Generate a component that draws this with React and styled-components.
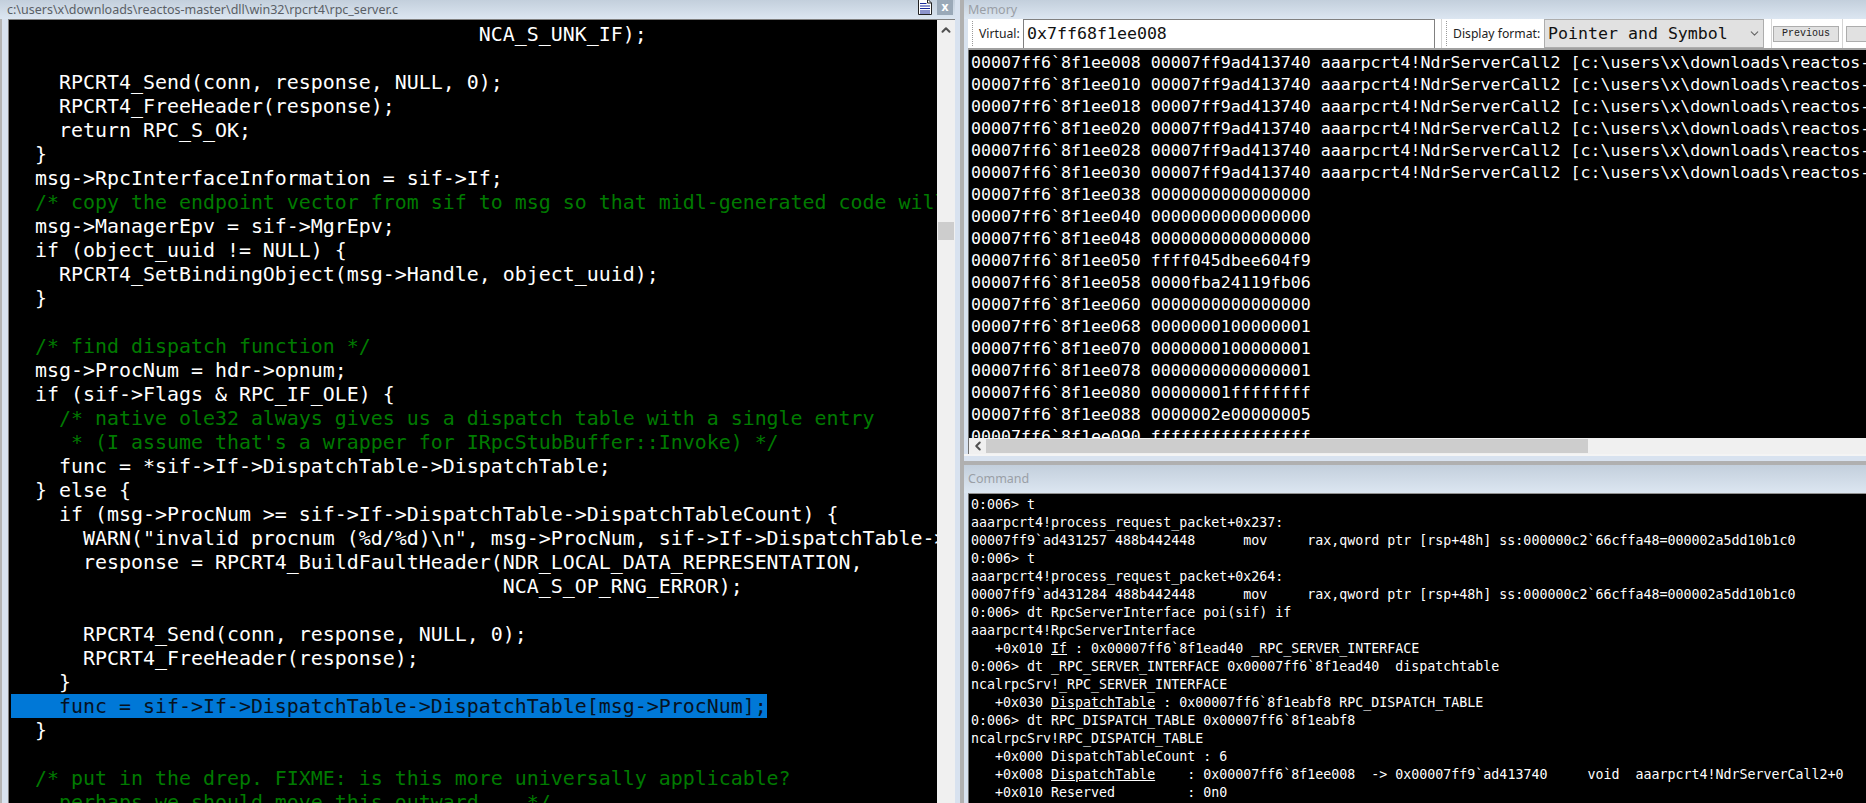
import React from 'react';
import styled, { createGlobalStyle } from 'styled-components';
import { ChevronDown, ChevronLeft, ChevronUp } from 'lucide-react';

const GlobalStyle = createGlobalStyle`
  html, body {
    margin: 0;
    padding: 0;
    background: #fff;
  }
`;

const MONO = '"DejaVu Sans Mono", "Liberation Mono", monospace';
const UI = '"Noto Sans", "Open Sans", sans-serif';

const codeLines = [
  { text: '                                       NCA_S_UNK_IF);' },
  { text: '' },
  { text: '    RPCRT4_Send(conn, response, NULL, 0);' },
  { text: '    RPCRT4_FreeHeader(response);' },
  { text: '    return RPC_S_OK;' },
  { text: '  }' },
  { text: '  msg->RpcInterfaceInformation = sif->If;' },
  { text: '  /* copy the endpoint vector from sif to msg so that midl-generated code will', comment: true },
  { text: '  msg->ManagerEpv = sif->MgrEpv;' },
  { text: '  if (object_uuid != NULL) {' },
  { text: '    RPCRT4_SetBindingObject(msg->Handle, object_uuid);' },
  { text: '  }' },
  { text: '' },
  { text: '  /* find dispatch function */', comment: true },
  { text: '  msg->ProcNum = hdr->opnum;' },
  { text: '  if (sif->Flags & RPC_IF_OLE) {' },
  { text: '    /* native ole32 always gives us a dispatch table with a single entry', comment: true },
  { text: "     * (I assume that's a wrapper for IRpcStubBuffer::Invoke) */", comment: true },
  { text: '    func = *sif->If->DispatchTable->DispatchTable;' },
  { text: '  } else {' },
  { text: '    if (msg->ProcNum >= sif->If->DispatchTable->DispatchTableCount) {' },
  { text: '      WARN("invalid procnum (%d/%d)\\n", msg->ProcNum, sif->If->DispatchTable->DispatchTableCount);' },
  { text: '      response = RPCRT4_BuildFaultHeader(NDR_LOCAL_DATA_REPRESENTATION,' },
  { text: '                                         NCA_S_OP_RNG_ERROR);' },
  { text: '' },
  { text: '      RPCRT4_Send(conn, response, NULL, 0);' },
  { text: '      RPCRT4_FreeHeader(response);' },
  { text: '    }' },
  { text: '    func = sif->If->DispatchTable->DispatchTable[msg->ProcNum];', selected: true },
  { text: '  }' },
  { text: '' },
  { text: '  /* put in the drep. FIXME: is this more universally applicable?', comment: true },
  { text: '    perhaps we should move this outward... */', comment: true },
];

const SYMBOL = 'aaarpcrt4!NdrServerCall2 [c:\\users\\x\\downloads\\reactos-master\\dll\\win32\\rpcrt4\\ndr_stubless.c]';

const memoryRows = [
  ['008', '00007ff9ad413740', SYMBOL],
  ['010', '00007ff9ad413740', SYMBOL],
  ['018', '00007ff9ad413740', SYMBOL],
  ['020', '00007ff9ad413740', SYMBOL],
  ['028', '00007ff9ad413740', SYMBOL],
  ['030', '00007ff9ad413740', SYMBOL],
  ['038', '0000000000000000'],
  ['040', '0000000000000000'],
  ['048', '0000000000000000'],
  ['050', 'ffff045dbee604f9'],
  ['058', '0000fba24119fb06'],
  ['060', '0000000000000000'],
  ['068', '0000000100000001'],
  ['070', '0000000100000001'],
  ['078', '0000000000000001'],
  ['080', '00000001ffffffff'],
  ['088', '0000002e00000005'],
  ['090', 'ffffffffffffffff'],
];

const commandLines = [
  ['0:006> t'],
  ['aaarpcrt4!process_request_packet+0x237:'],
  ['00007ff9`ad431257 488b442448      mov     rax,qword ptr [rsp+48h] ss:000000c2`66cffa48=000002a5dd10b1c0'],
  ['0:006> t'],
  ['aaarpcrt4!process_request_packet+0x264:'],
  ['00007ff9`ad431284 488b442448      mov     rax,qword ptr [rsp+48h] ss:000000c2`66cffa48=000002a5dd10b1c0'],
  ['0:006> dt RpcServerInterface poi(sif) if'],
  ['aaarpcrt4!RpcServerInterface'],
  ['   +0x010 ', { field: 'If' }, ' : 0x00007ff6`8f1ead40 _RPC_SERVER_INTERFACE'],
  ['0:006> dt _RPC_SERVER_INTERFACE 0x00007ff6`8f1ead40  dispatchtable'],
  ['ncalrpcSrv!_RPC_SERVER_INTERFACE'],
  ['   +0x030 ', { field: 'DispatchTable' }, ' : 0x00007ff6`8f1eabf8 RPC_DISPATCH_TABLE'],
  ['0:006> dt RPC_DISPATCH_TABLE 0x00007ff6`8f1eabf8'],
  ['ncalrpcSrv!RPC_DISPATCH_TABLE'],
  ['   +0x000 DispatchTableCount : 6'],
  ['   +0x008 ', { field: 'DispatchTable' }, '    : 0x00007ff6`8f1ee008  -> 0x00007ff9`ad413740     void  aaarpcrt4!NdrServerCall2+0'],
  ['   +0x010 Reserved         : 0n0'],
];

const App = () => {
  return (
    <>
      <GlobalStyle />
      <Workspace>
        <SourceWindow>
          <TitleBar $height={19}>
            <TitleText $color='#5a5f66' $indent={7}>
              c:\users\x\downloads\reactos-master\dll\win32\rpcrt4\rpc_server.c
            </TitleText>
            <DocIcon width='14' height='15' viewBox='0 0 14 15'>
              <path d='M0.5 -1H9.5L13.5 3V14.5H0.5Z' fill='#fff' stroke='#222' />
              <path d='M9.5 -1V3H13.5' fill='none' stroke='#222' />
              <path d='M2 3.5H8.5M2 6H12M2 8.5H12M2 11H12M2 13H12' stroke='#1a2a9a' strokeWidth='1.2' />
            </DocIcon>
            <CloseButton>x</CloseButton>
          </TitleBar>
          <SourceBody>
            <CodeArea>
              {codeLines.map((line, i) => (
                <CodeLine key={i} $comment={line.comment} $selected={line.selected}>
                  {line.text}
                </CodeLine>
              ))}
            </CodeArea>
            <VerticalScroll>
              <ScrollArrow $width={18} $height={20}>
                <ChevronUp size={14} strokeWidth={3.5} />
              </ScrollArrow>
              <VerticalThumb />
            </VerticalScroll>
          </SourceBody>
        </SourceWindow>

        <Splitter />

        <RightColumn>
          <TitleBar $height={19}>
            <TitleText $color='#9a9fa6' $indent={4}>Memory</TitleText>
          </TitleBar>
          <Toolbar>
            <Grip />
            <ToolLabel $width={44}>Virtual:</ToolLabel>
            <AddressInput>0x7ff68f1ee008</AddressInput>
            <ToolDivider />
            <Grip />
            <ToolLabel $width={91}>Display format:</ToolLabel>
            <FormatSelect>
              <span>Pointer and Symbol</span>
              <ChevronDown size={13} color='#666' />
            </FormatSelect>
            <ToolDivider $left={7} $right={1} />
            <PagerButton $width={66}>Previous</PagerButton>
            <ToolDivider $left={3} $right={3} />
            <PagerButton $width={40} />
          </Toolbar>
          <MemoryBody>
            {memoryRows.map(([offset, value, symbol]) => (
              <MemoryRow key={offset}>
                {`00007ff6\`8f1ee${offset} ${value}${symbol ? ' ' + symbol : ''}`}
              </MemoryRow>
            ))}
          </MemoryBody>
          <HorizontalScroll>
            <ScrollArrow $width={17} $height={16}>
              <ChevronLeft size={14} strokeWidth={3.5} />
            </ScrollArrow>
            <HorizontalThumb />
          </HorizontalScroll>

          <PaneGap />

          <TitleBar $height={28}>
            <TitleText $color='#9a9fa6' $indent={4}>Command</TitleText>
          </TitleBar>
          <CommandBody>
            {commandLines.map((parts, i) => (
              <CommandRow key={i}>
                {parts.map((part, j) =>
                  typeof part === 'string' ? part : <CommandField key={j}>{part.field}</CommandField>
                )}
              </CommandRow>
            ))}
          </CommandBody>
        </RightColumn>
      </Workspace>
    </>
  );
};

export default App;

const Workspace = styled.div`
  width: 1866px;
  height: 803px;
  display: flex;
  overflow: hidden;
  background: #fff;
`;

const SourceWindow = styled.section`
  width: 955px;
  height: 803px;
  flex: none;
  display: flex;
  flex-direction: column;
`;

const TitleBar = styled.div`
  height: ${(p) => p.$height}px;
  flex: none;
  display: flex;
  align-items: center;
  padding-right: 2px;
  box-sizing: border-box;
  background: linear-gradient(#c3cfdc, #dce6f1);
`;

const TitleText = styled.div`
  flex: 1;
  font-family: ${UI};
  font-size: 12.5px;
  line-height: 18px;
  white-space: nowrap;
  padding-left: ${(p) => p.$indent}px;
  color: ${(p) => p.$color};
`;

const DocIcon = styled.svg`
  flex: none;
  margin-right: 5px;
  align-self: flex-start;
`;

const CloseButton = styled.div`
  width: 16px;
  height: 15px;
  flex: none;
  align-self: flex-start;
  background: #9aa9b8;
  color: #fff;
  font-family: ${UI};
  font-size: 12px;
  font-weight: 700;
  line-height: 13px;
  text-align: center;
`;

const SourceBody = styled.div`
  flex: 1;
  min-height: 0;
  display: flex;
  background: #d8e2ef;
  border-left: 2px solid #b4b4b4;
  padding-left: 6px;
`;

const CodeArea = styled.div`
  flex: 1;
  min-width: 0;
  background: #000;
  border-left: 1px solid #808080;
  border-top: 1px solid #808080;
  padding: 2px 0 0 2px;
  overflow: hidden;
`;

const CodeLine = styled.div`
  height: 24px;
  line-height: 26px;
  width: ${(p) => (p.$selected ? 'fit-content' : 'auto')};
  font-family: ${MONO};
  font-size: 19.93px;
  white-space: pre;
  color: ${(p) => (p.$selected ? '#06121f' : p.$comment ? '#007a00' : '#fff')};
  background: ${(p) => (p.$selected ? '#0078d7' : 'transparent')};
`;

const VerticalScroll = styled.div`
  width: 18px;
  flex: none;
  display: flex;
  flex-direction: column;
  background: #f0f0f0;
  border-top: 1px solid #808080;
`;

const ScrollArrow = styled.div`
  width: ${(p) => p.$width}px;
  height: ${(p) => p.$height}px;
  flex: none;
  display: flex;
  align-items: center;
  justify-content: center;
  color: #505050;
  background: #f0f0f0;
`;

const VerticalThumb = styled.div`
  height: 18px;
  margin: 182px 1px 0;
  background: #cdcdcd;
`;

const Splitter = styled.div`
  width: 9px;
  flex: none;
  background: linear-gradient(90deg, #d8e2ef 0 5px, #b0b0b0 5px);
`;

const RightColumn = styled.section`
  flex: 1;
  min-width: 0;
  display: flex;
  flex-direction: column;
  background: #d8e2ef;
`;

const Toolbar = styled.div`
  height: 29px;
  flex: none;
  display: flex;
  align-items: stretch;
  margin-left: 4px;
  background: #fff;
  border-bottom: 2px solid #a0a0a0;
`;

const Grip = styled.div`
  width: 0;
  flex: none;
  margin: 2px 6px 2px 4px;
  border-left: 1px dotted #9a9a9a;
`;

const ToolLabel = styled.div`
  width: ${(p) => p.$width}px;
  flex: none;
  font-family: ${UI};
  font-size: 12.2px;
  line-height: 29px;
  color: #222;
  white-space: nowrap;
`;

const AddressInput = styled.div`
  width: 412px;
  flex: none;
  box-sizing: border-box;
  background: #fff;
  border: 1px solid #808080;
  border-bottom: none;
  padding-left: 3px;
  margin-right: 6px;
  font-family: ${MONO};
  font-size: 16.6px;
  line-height: 28px;
  color: #111;
`;

const FormatSelect = styled.div`
  width: 220px;
  flex: none;
  box-sizing: border-box;
  display: flex;
  align-items: center;
  justify-content: space-between;
  background: #e1e1e1;
  border: 1px solid #adadad;
  padding: 0 2px 0 3px;
  font-family: ${MONO};
  font-size: 16.6px;
  color: #111;
`;

const ToolDivider = styled.div`
  width: 1px;
  flex: none;
  margin: 0 ${(p) => p.$right || 0}px 0 ${(p) => p.$left || 0}px;
  background: #d4d4d4;
`;

const PagerButton = styled.div`
  width: ${(p) => p.$width}px;
  height: 16px;
  flex: none;
  align-self: center;
  box-sizing: border-box;
  background: #e1e1e1;
  border: 1px solid #adadad;
  font-family: "Liberation Mono", monospace;
  font-size: 10px;
  line-height: 14px;
  text-align: center;
  color: #222;
`;

const MemoryBody = styled.div`
  height: 388px;
  flex: none;
  box-sizing: border-box;
  margin-left: 4px;
  background: #000;
  border-left: 1px solid #707070;
  padding: 2px 0 0 2px;
  overflow: hidden;
`;

const MemoryRow = styled.div`
  height: 22px;
  line-height: 22px;
  font-family: ${MONO};
  font-size: 16.6px;
  white-space: pre;
  color: #fff;
`;

const HorizontalScroll = styled.div`
  height: 16px;
  flex: none;
  display: flex;
  margin-left: 4px;
  background: #f0f0f0;
  border-left: 1px solid #707070;
`;

const HorizontalThumb = styled.div`
  width: 602px;
  background: #cdcdcd;
  margin: 1px 0;
`;

const PaneGap = styled.div`
  height: 11px;
  flex: none;
  background: linear-gradient(#f4f4f4 0 2px, #d8e2ef 2px 7px, #b0b0b0 7px);
`;

const CommandBody = styled.div`
  flex: 1;
  min-height: 0;
  margin-left: 4px;
  background: #000;
  border-left: 1px solid #707070;
  border-top: 1px solid #909090;
  padding: 2px 0 0 2px;
  overflow: hidden;
`;

const CommandRow = styled.div`
  height: 18px;
  line-height: 18px;
  font-family: ${MONO};
  font-size: 13.3px;
  white-space: pre;
  color: #fff;
`;

const CommandField = styled.span`
  text-decoration: underline;
`;
